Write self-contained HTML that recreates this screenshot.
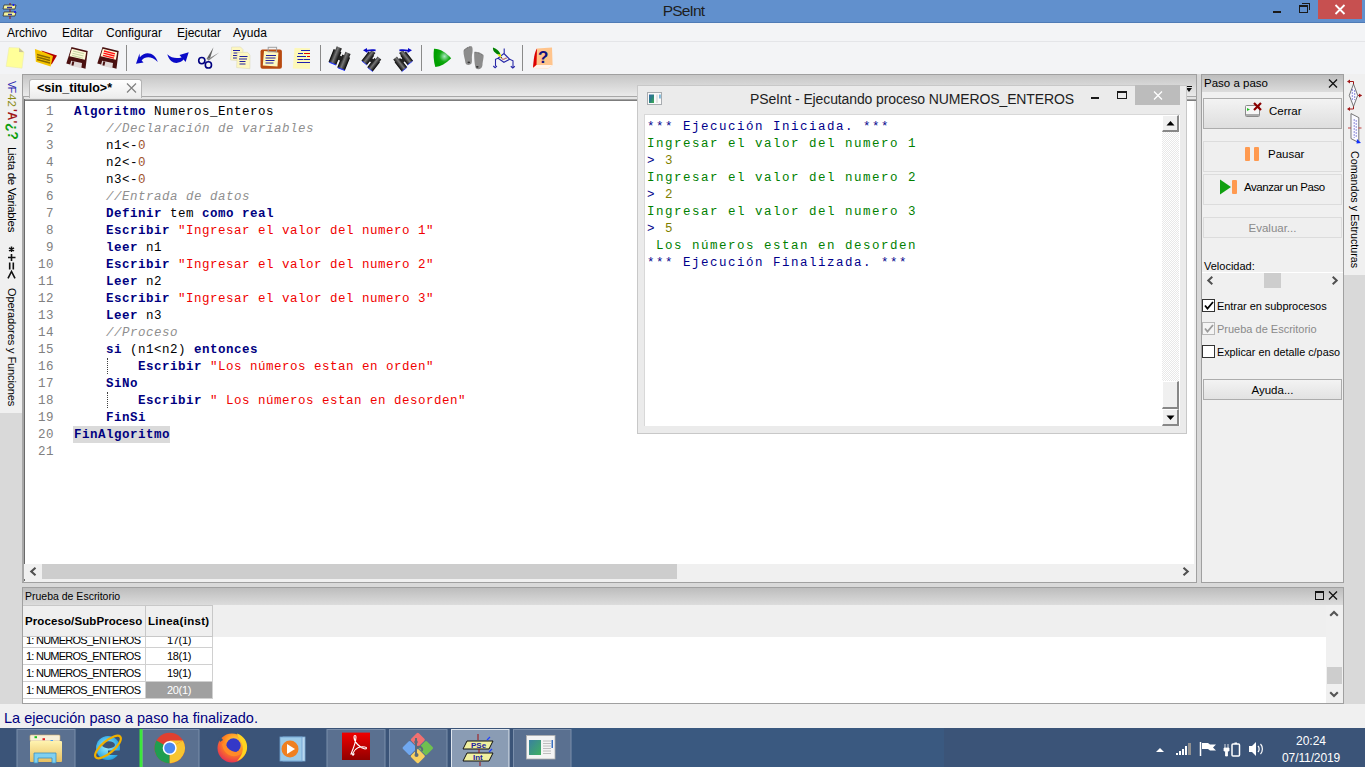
<!DOCTYPE html>
<html><head><meta charset="utf-8">
<style>
*{margin:0;padding:0;box-sizing:border-box}
html,body{width:1365px;height:767px;overflow:hidden;background:#d9d9d9;font-family:"Liberation Sans",sans-serif;font-size:12px;color:#000;position:relative}
.a{position:absolute}
.nw{white-space:nowrap}
#title{left:0;top:0;width:1365px;height:23px;background:#6190cd;border-bottom:1px solid #4f7bb6}
#menu{left:0;top:23px;width:1365px;height:18px;background:#f3f4f6}
#menu span{position:absolute;top:3px;font-size:12px}
#tool{left:0;top:41px;width:1365px;height:33px;background:#f3f4f6;border-top:1px solid #e4e5e8}
.sep{position:absolute;top:3px;width:1px;height:26px;background:#9a9a9a}
.code{font-family:"Liberation Mono",monospace;font-size:12.5px;letter-spacing:0.5px;line-height:17px;white-space:pre}
.kw{color:#00007f;font-weight:bold}
.str{color:#f00000}
.cm{color:#8f8f8f;font-style:italic}
.num{color:#a0522d}
.ln{color:#808080}
.vt{transform-origin:0 0;transform:rotate(90deg);white-space:nowrap}
.btn{position:absolute;left:1203px;width:139px;border:1px solid #acacac;background:linear-gradient(#f3f3f3,#dedede)}
.btnf{position:absolute;left:1203px;width:139px;border:1px solid #dcdcdc;background:#efefef}
.cb{position:absolute;left:1202px;width:13px;height:13px;border:1px solid #333;background:#fff}
.row{position:absolute;height:17px;border-bottom:1px solid #d0d0d0}
</style></head><body>
<!-- title bar -->
<div id="title" class="a">
  <svg class="a" style="left:2px;top:3px" width="16" height="16" viewBox="0 0 16 16">
    <path d="M8 0v16" stroke="#a01010" stroke-width="1"/>
    <path d="M2 2h12l-1 4H1z" fill="#f4f4a0" stroke="#333" stroke-width="0.8"/>
    <path d="M2 9h12l-1 4H1z" fill="#f4f4a0" stroke="#333" stroke-width="0.8"/>
    <path d="M5 4.5h5M6 11.5h4" stroke="#3030a0" stroke-width="1.6"/>
    <circle cx="11.5" cy="2" r="1" fill="#1010ff"/><circle cx="13" cy="9" r="1" fill="#1010ff"/>
  </svg>
  <div class="a nw" style="left:1px;width:1365px;top:2px;text-align:center;font-size:15.5px;letter-spacing:-0.8px;color:#1e1e1e">PSeInt</div>
  <div class="a" style="left:1273px;top:11px;width:8px;height:2px;background:#1a1a1a"></div>
  <div class="a" style="left:1299px;top:5px;width:9px;height:8px;border:1px solid #1a1a1a;border-top-width:2px"></div>
  <div class="a" style="left:1302px;top:3px;width:8px;height:7px;border-top:1px solid #1a1a1a;border-right:1px solid #1a1a1a"></div>
  <div class="a" style="left:1318px;top:0;width:44px;height:19px;background:#c75050"></div>
  <svg class="a" style="left:1334px;top:4px" width="12" height="11" viewBox="0 0 12 11"><path d="M1.5 1l9 9M10.5 1l-9 9" stroke="#fff" stroke-width="1.8"/></svg>
</div>
<!-- menu -->
<div id="menu" class="a">
<span style="left:7px">Archivo</span><span style="left:62px">Editar</span><span style="left:106px">Configurar</span><span style="left:177px">Ejecutar</span><span style="left:233px">Ayuda</span>
</div>
<!-- toolbar -->
<div id="tool" class="a"></div>
<svg class="a" style="left:0;top:0" width="560" height="74" viewBox="0 0 560 74">
<defs>
<linearGradient id="bino" x1="0" x2="1" y1="0" y2="0"><stop offset="0" stop-color="#000"/><stop offset="0.45" stop-color="#777"/><stop offset="1" stop-color="#000"/></linearGradient>
<radialGradient id="runG" cx="0.62" cy="0.42" r="0.5"><stop offset="0" stop-color="#a8e8c0"/><stop offset="0.6" stop-color="#10a810"/><stop offset="1" stop-color="#00a000"/></radialGradient>
</defs>
<!-- new -->
<path d="M9 47.5L19.2 47.9 24 52.2 22 68.2 6.1 66.4z" fill="#ffff99" stroke="#e8e8b0" stroke-width="0.5"/>
<path d="M19.2 47.9L24 52.2 19 52z" fill="#c9c39a"/>
<!-- open -->
<path d="M41.3 50.4L57 55.4 51.6 64.5z" fill="#b00000"/>
<path d="M34.9 49L43.6 52 53 56 50.6 66.4 35.9 61.7z" fill="#f5c400"/>
<path d="M37 54.5l13 3.5M37 57l13 3.5M37 59.5l13 3.5" stroke="#8a6a00" stroke-width="1.3"/>
<!-- save -->
<g id="sv">
<path d="M71.5 46.9L87.7 50.9 85.5 68.7 66.3 63.6z" fill="#4a1010"/>
<path d="M71.8 48.8L86.2 52.3 84.9 59.8 69.6 56.2z" fill="#fff8d8"/>
<path d="M71.2 60.8L82 63.1 81.3 68.3 69.8 65.4z" fill="#e0d8d8"/>
<rect x="72" y="61.5" width="2" height="4" fill="#4a1010" transform="rotate(14 73 63)"/>
</g>
<path d="M73 51l11 2.8M72.5 53.2l11 2.8M72 55.4l11 2.8" stroke="#c6d6a4" stroke-width="1.1"/>
<use href="#sv" x="31"/>
<path d="M104 51l11 2.8M103.5 53.2l11 2.8M103 55.4l11 2.8" stroke="#ff1010" stroke-width="1.3"/>
<!-- undo -->
<path d="M139.5 53.5L136 63.8 143.5 62.5 141.6 60.5C145 56.5 151 55.5 157.8 62 155 53 146 50 139.8 57.2z" fill="#0a0ac8"/>
<!-- redo -->
<path d="M188.7 52.2L185.6 62 183.6 59.6C179 64.5 170.5 65 167.3 54.3 171.5 58.5 177 58.5 181.6 57.4L179.5 55z" fill="#0a0ac8"/>
<!-- scissors -->
<path d="M206.5 59L213.5 47.2 210 58.5z" fill="#606060"/>
<path d="M207 59.5L219.2 52.4 208.6 60.8z" fill="#888"/>
<circle cx="201.8" cy="60.6" r="3.1" fill="none" stroke="#000080" stroke-width="1.6"/>
<circle cx="208.4" cy="64.9" r="3.1" fill="none" stroke="#000080" stroke-width="1.6"/>
<!-- copy -->
<path d="M231.6 47L240.5 46.9 243 49.5 242.9 61 230.6 60z" fill="#fdf7c0" stroke="#d8d4b0" stroke-width="0.5"/>
<path d="M233 50.5h7M233.5 53h6M233 55.5h5M233 58h4" stroke="#2020a0" stroke-width="1"/>
<path d="M237.3 52.5L247.5 52.3 250 55 249.9 68.7 236.6 67.6z" fill="#fdf7c0" stroke="#d8d4b0" stroke-width="0.5"/>
<path d="M239.5 56.5h8M239 59h8M239.5 61.5h6M239.5 64h6" stroke="#2020a0" stroke-width="1"/>
<!-- paste -->
<rect x="260.5" y="49.4" width="21.4" height="19.3" rx="2" fill="#b84a10"/>
<path d="M264 51.1L278.4 52.5 277.5 66.6 262.8 65.5z" fill="#fdf7c0"/>
<path d="M266 55.5h10M265.5 58h10M265.5 60.5h9M265.5 63h8" stroke="#2020a0" stroke-width="1"/>
<rect x="268.2" y="47.3" width="8.4" height="4.5" fill="none" stroke="#a0a0a0" stroke-width="1"/>
<!-- indent -->
<path d="M294.5 48L310 48.2 310 69 292.8 68.5z" fill="#fdf8b8"/>
<path d="M301 50.5h9M298 53.5h5M304 53.5h6M297 56.5h9M297.5 59.5h6M304 59.5h6M297 62.5h13" stroke="#2020b0" stroke-width="1.2"/>
<path d="M304 53.5h6M307 56.5h3" stroke="#e00000" stroke-width="1.2"/>
<!-- binoculars -->
<g transform="translate(341,58) rotate(22) scale(0.92)">
<path d="M-9 -10h6v4h1v15h-9v-15h2z" fill="url(#bino)"/>
<path d="M2 -8h6v4h1v15h-9v-15h2z" fill="url(#bino)"/>
<rect x="-3" y="-2" width="5" height="5" fill="#222"/>
<path d="M-10 9h8M1 11h8" stroke="#2030ff" stroke-width="1"/>
</g>
<g transform="translate(372.5,60.5) rotate(38) scale(0.78)">
<path d="M-9 -10h6v4h1v15h-9v-15h2z" fill="url(#bino)"/>
<path d="M2 -8h6v4h1v15h-9v-15h2z" fill="url(#bino)"/>
<rect x="-3" y="-2" width="5" height="5" fill="#222"/>
<path d="M-10 9h8M1 11h8" stroke="#2030ff" stroke-width="1"/>
</g>
<path d="M363 50.3L367 48 367 49.8C370 49 373 49 375.7 49.5L375.5 51.2C373 50.8 370 50.8 367.3 51.6L367.5 53z" fill="#0a0ac8"/>
<g transform="translate(402,60.5) scale(-1,1) rotate(38) scale(0.78)">
<path d="M-9 -10h6v4h1v15h-9v-15h2z" fill="url(#bino)"/>
<path d="M2 -8h6v4h1v15h-9v-15h2z" fill="url(#bino)"/>
<rect x="-3" y="-2" width="5" height="5" fill="#222"/>
<path d="M-10 9h8M1 11h8" stroke="#2030ff" stroke-width="1"/>
</g>
<path d="M412 50.3L408 48 408 49.8C405 49 402 49 399.3 49.5L399.5 51.2C402 50.8 405 50.8 407.7 51.6L407.5 53z" fill="#0a0ac8"/>
<!-- run -->
<path d="M434 48.7C440 48.5 446 52.5 451.2 58.2 446 63.5 440.5 66.5 435.3 67 433.5 61 433.2 54 434 48.7z" fill="url(#runG)"/>
<!-- footprints -->
<path d="M463.5 51C464 48.5 469 46 471.5 46.3 473 47 472.8 52 472 55 471.5 58 472.5 61 471.5 63.5 470 65.5 466 65.5 465.5 63 465 59 463.3 55 463.5 51z" fill="#8c8c8c"/>
<path d="M464 50.5l1.5-1.2M466.5 48.5l1.5-.8M469 47.3l1.2-.5" stroke="#777" stroke-width="1"/>
<ellipse cx="468.8" cy="62.3" rx="1.3" ry="0.9" fill="#333"/>
<path d="M474.2 52C475 51 481 52 483.5 55 484 57 482.5 62 482.5 65 482 69.5 478 70 476 68.5 474.5 66 474 56 474.2 52z" fill="#8c8c8c"/>
<path d="M475 52.5l1.5 .3M478 53l1.5 .6M481 54.3l1.3 .8" stroke="#777" stroke-width="1"/>
<ellipse cx="477.3" cy="66.8" rx="1.3" ry="0.9" fill="#333"/>
<!-- diagram -->
<path d="M504.2 48.4v5M503.9 53.5L509.7 59.3 503.9 62.3 498 58.2z M498 58.2L495.5 59.3v6.6M509.7 59.3L513 60.8v6.9" stroke="#2828a8" stroke-width="1.1" fill="none"/>
<path d="M493.3 66l1.8 1.6 1.8-1.6M510.8 66.2l2 1.7 2-1.7" stroke="#2828a8" stroke-width="1.2" fill="none"/>
<path d="M493 47.5C496 48.5 499.5 51 500.5 54.5 499.5 55.5 496 54 494 51.5 493 50 492.8 48.5 493 47.5z" fill="#008000"/>
<path d="M497.3 54.3C498.7 54.8 500 54.5 500.8 54 501.3 55.5 501.3 56.8 500.8 57.3 499.5 56.8 498 55.8 497.3 54.3z" fill="#f0f000"/>
<circle cx="501.3" cy="57.8" r="0.8" fill="#5a2a00"/>
<path d="M502 58.8c1 .6 2 .6 3-.2s1.5-.4 1.8-.3" stroke="#a02020" stroke-width="0.9" fill="none"/>
<!-- help -->
<path d="M537 48.5L552 47.5 552.6 65 548 68.5 533 68z" fill="#ffc48c"/>
<path d="M537 48.5C534.5 52 533.5 60 533 68L536.5 65z" fill="#dd0000"/>
<path d="M536.5 65L552.6 65 548 68.5 533 68z" fill="#fff4ec"/>
<text x="538" y="63" font-family="Liberation Sans" font-weight="bold" font-size="17" fill="#101080">?</text>
<!-- separators -->
<rect x="126" y="45" width="1" height="26" fill="#8a8a8a"/>
<rect x="320" y="45" width="1" height="26" fill="#8a8a8a"/>
<rect x="421" y="45" width="1" height="26" fill="#8a8a8a"/>
<rect x="522" y="45" width="1" height="26" fill="#8a8a8a"/>
</svg>




<!-- editor notebook -->
<div class="a" style="left:22px;top:74px;width:1175px;height:509px;background:#f0f0f0;border:1px solid #a0a0a0"></div>
<div class="a" style="left:23px;top:75px;width:1173px;height:21px;background:linear-gradient(#c6c6c6,#eaeaea)"></div>



<div class="a" style="left:23px;top:96px;width:1173px;height:1px;background:#a8a8a8"></div>
<div class="a" style="left:23px;top:97px;width:1173px;height:2px;background:#e4e4e4"></div>
<div class="a" style="left:23px;top:99px;width:1173px;height:1px;background:#a4a4a4"></div>
<div class="a" style="left:23px;top:100px;width:1173px;height:1px;background:#7c7c7c"></div>
<div class="a" style="left:29px;top:79px;width:113px;height:19px;border:1px solid #b4b4b4;border-bottom:none;border-radius:3px 3px 0 0;background:linear-gradient(#ffffff,#ececec)"></div>
<div class="a nw" style="left:37px;top:81px;font-size:12.5px;font-weight:bold">&lt;sin_titulo&gt;*</div>
<svg class="a" style="left:126px;top:83px" width="11" height="10" viewBox="0 0 11 10"><path d="M1 0.5l9 9M10 0.5l-9 9" stroke="#808080" stroke-width="1.2"/></svg>
<svg class="a" style="left:1186px;top:86px" width="7" height="7" viewBox="0 0 7 7"><path d="M0 0h6v1H0zM0 2h6L3 6z" fill="#111"/></svg>
<!-- editor white -->
<div class="a" style="left:22px;top:96px;width:2px;height:486px;background:#a8a8a8"></div>
<div class="a" style="left:24px;top:99px;width:1px;height:482px;background:#6a6a6a"></div>
<div class="a" style="left:25px;top:101px;width:1169px;height:463px;background:#fff"></div>
<!-- line numbers -->
<div class="a code ln" style="left:22px;top:104px;width:32px;text-align:right">1
2
3
4
5
6
7
8
9
10
11
12
13
14
15
16
17
18
19
20
21</div>
<div class="a" style="left:73px;top:426px;width:97px;height:17px;background:#dadada"></div>
<div class="a code" style="left:74px;top:104px"><span class="kw">Algoritmo</span> Numeros_Enteros
    <span class="cm">//Declaración de variables</span>
    n1&lt;-<span class="num">0</span>
    n2&lt;-<span class="num">0</span>
    n3&lt;-<span class="num">0</span>
    <span class="cm">//Entrada de datos</span>
    <span class="kw">Definir</span> tem <span class="kw">como</span> <span class="kw">real</span>
    <span class="kw">Escribir</span> <span class="str">"Ingresar el valor del numero 1"</span>
    <span class="kw">leer</span> n1
    <span class="kw">Escribir</span> <span class="str">"Ingresar el valor del numero 2"</span>
    <span class="kw">Leer</span> n2
    <span class="kw">Escribir</span> <span class="str">"Ingresar el valor del numero 3"</span>
    <span class="kw">Leer</span> n3
    <span class="cm">//Proceso</span>
    <span class="kw">si</span> (n1&lt;n2) <span class="kw">entonces</span>
        <span class="kw">Escribir</span> <span class="str">"Los números estan en orden"</span>
    <span class="kw">SiNo</span>
        <span class="kw">Escribir</span> <span class="str">" Los números estan en desorden"</span>
    <span class="kw">FinSi</span>
<span class="kw">FinAlgoritmo</span>
</div>
<div class="a" style="left:107px;top:358px;width:0;height:16px;border-left:1px dotted #404040"></div>
<div class="a" style="left:107px;top:392px;width:0;height:16px;border-left:1px dotted #404040"></div>
<!-- h scrollbar -->
<div class="a" style="left:24px;top:564px;width:1170px;height:15px;background:#f0f0f0"></div>
<div class="a" style="left:42px;top:564px;width:635px;height:15px;background:#cdcdcd"></div>
<svg class="a" style="left:29px;top:567px" width="8" height="9" viewBox="0 0 8 9"><path d="M6.5 0.8L2.3 4.5l4.2 3.7" stroke="#505050" stroke-width="2.1" fill="none"/></svg>
<svg class="a" style="left:1182px;top:567px" width="8" height="9" viewBox="0 0 8 9"><path d="M1.5 0.8l4.2 3.7-4.2 3.7" stroke="#505050" stroke-width="2.1" fill="none"/></svg>

<!-- console window -->
<div class="a" style="left:637px;top:85px;width:550px;height:349px;background:#ebebeb;border:1px solid #c8c8c8"></div>
<svg class="a" style="left:647px;top:92px" width="15" height="13" viewBox="0 0 15 13">
  <defs><linearGradient id="cwG" x1="0" y1="0" x2="1" y2="1"><stop offset="0" stop-color="#3a6aaa"/><stop offset="0.5" stop-color="#2a8080"/><stop offset="1" stop-color="#40b050"/></linearGradient></defs>
  <rect x="0.5" y="0.5" width="14" height="12" fill="#fafafa" stroke="#a8acb0"/>
  <rect x="2" y="2.5" width="5" height="8.5" fill="url(#cwG)"/>
  <rect x="9" y="2.5" width="2" height="8.5" fill="#e4e4e4"/>
  <rect x="12.2" y="2.5" width="1.5" height="4" fill="#60a8d0"/>
</svg>
<div class="a nw" style="left:750px;top:91px;font-size:14px;color:#1e1e1e;letter-spacing:-0.12px">PSeInt - Ejecutando proceso NUMEROS_ENTEROS</div>
<div class="a" style="left:1091px;top:97px;width:8px;height:2px;background:#1a1a1a"></div>
<div class="a" style="left:1117px;top:91px;width:10px;height:8px;border:1px solid #1a1a1a;border-top-width:2px"></div>
<div class="a" style="left:1135px;top:85px;width:45px;height:20px;background:#bcbcbc"></div>
<svg class="a" style="left:1153px;top:91px" width="10" height="9" viewBox="0 0 10 9"><path d="M1 0.5l8 8M9 0.5l-8 8" stroke="#fff" stroke-width="1.3"/></svg>
<div class="a" style="left:644px;top:114px;width:536px;height:312px;background:#fff;border-top:1px solid #d8d8d8;border-left:1px solid #d8d8d8"></div>
<div class="a code" style="left:647px;top:119px;color:#00008b;font-size:12.5px;letter-spacing:1.5px"><span>*** Ejecución Iniciada. ***</span>
<span style="color:#008000">Ingresar el valor del numero 1</span>
&gt; <span style="color:#7f7f00">3</span>
<span style="color:#008000">Ingresar el valor del numero 2</span>
&gt; <span style="color:#7f7f00">2</span>
<span style="color:#008000">Ingresar el valor del numero 3</span>
&gt; <span style="color:#7f7f00">5</span>
<span style="color:#008000"> Los números estan en desorden</span>
*** Ejecución Finalizada. ***</div>
<!-- console vscroll -->
<div class="a" style="left:1162px;top:115px;width:17px;height:311px;background:repeating-conic-gradient(#ffffff 0 25%,#e8e8e8 0 50%) 0 0/2px 2px"></div>
<div class="a" style="left:1162px;top:115px;width:17px;height:17px;background:#f0f0f0;border-right:2px solid #888;border-bottom:2px solid #888;border-left:1px solid #fff;border-top:1px solid #fff"></div>
<svg class="a" style="left:1166px;top:120px" width="9" height="6" viewBox="0 0 9 6"><path d="M0.5 5.5L4.5 1l4 4.5z" fill="#000"/></svg>
<div class="a" style="left:1162px;top:381px;width:17px;height:28px;background:#f0f0f0;border-right:2px solid #888;border-bottom:2px solid #888;border-left:1px solid #fff;border-top:1px solid #fff"></div>
<div class="a" style="left:1162px;top:409px;width:17px;height:17px;background:#f0f0f0;border-right:2px solid #888;border-bottom:2px solid #888;border-left:1px solid #fff;border-top:1px solid #fff"></div>
<svg class="a" style="left:1166px;top:415px" width="9" height="6" viewBox="0 0 9 6"><path d="M0.5 0.5h8L4.5 5z" fill="#000"/></svg>

<!-- right panel Paso a paso -->
<div class="a" style="left:1201px;top:74px;width:143px;height:509px;background:#f0f0f0;border:1px solid #a0a0a0"></div>
<div class="a" style="left:1202px;top:75px;width:141px;height:17px;background:linear-gradient(#bdbdbd,#dcdcdc)"></div>
<div class="a nw" style="left:1204px;top:77px;font-size:11.5px">Paso a paso</div>
<svg class="a" style="left:1328px;top:79px" width="10" height="9" viewBox="0 0 10 9"><path d="M1 0.5l8 8M9 0.5l-8 8" stroke="#111" stroke-width="1.3"/></svg>
<div class="btn" style="top:98px;height:31px"></div>
<svg class="a" style="left:1245px;top:102px" width="17" height="16" viewBox="0 0 17 16">
  <rect x="0.5" y="3.5" width="14" height="11" rx="1" fill="#f6f6f6" stroke="#8a8a8a"/>
  <rect x="1" y="12" width="13" height="2" fill="#aaa"/>
  <path d="M2 6l3 1.5-3 1.5z" fill="#20c020"/>
  <path d="M9 1l7 7M16 1l-7 7" stroke="#8b0000" stroke-width="2.2"/>
</svg>
<div class="a nw" style="left:1269px;top:105px;font-size:11.5px">Cerrar</div>
<div class="btnf" style="top:141px;height:31px"></div>
<div class="a" style="left:1245px;top:147px;width:5px;height:14px;background:#ff9a50;border-radius:1px"></div>
<div class="a" style="left:1254px;top:147px;width:5px;height:14px;background:#ff9a50;border-radius:1px"></div>
<div class="a nw" style="left:1268px;top:148px;font-size:11.5px">Pausar</div>
<div class="btnf" style="top:174px;height:31px"></div>
<svg class="a" style="left:1219px;top:179px" width="18" height="16" viewBox="0 0 18 16"><path d="M1 0.5l11 7.5-11 7.5z" fill="#10a010"/><rect x="13" y="1" width="5" height="14" rx="1" fill="#ff9a50"/></svg>
<div class="a nw" style="left:1244px;top:181px;font-size:11.5px;letter-spacing:-0.45px">Avanzar un Paso</div>
<div class="btnf" style="top:217px;height:21px"></div>
<div class="a nw" style="left:1203px;width:139px;text-align:center;top:222px;font-size:11.5px;color:#8a8a8a">Evaluar...</div>
<div class="a nw" style="left:1204px;top:260px;font-size:11px">Velocidad:</div>
<div class="a" style="left:1202px;top:272px;width:141px;height:17px;background:#f0f0f0;border-top:1px solid #fff"></div>
<svg class="a" style="left:1206px;top:276px" width="8" height="9" viewBox="0 0 8 9"><path d="M6.3 0.8L2.3 4.5l4 3.7" stroke="#505050" stroke-width="2" fill="none"/></svg>
<svg class="a" style="left:1331px;top:276px" width="8" height="9" viewBox="0 0 8 9"><path d="M1.7 0.8l4 3.7-4 3.7" stroke="#505050" stroke-width="2" fill="none"/></svg>
<div class="a" style="left:1264px;top:273px;width:17px;height:15px;background:#cdcdcd"></div>
<div class="cb" style="top:299px"></div>
<svg class="a" style="left:1204px;top:301px" width="10" height="9" viewBox="0 0 10 9"><path d="M1 4.5l2.5 3L9 1" stroke="#000" stroke-width="1.8" fill="none"/></svg>
<div class="a nw" style="left:1217px;top:300px;font-size:11px;letter-spacing:-0.05px">Entrar en subprocesos</div>
<div class="cb" style="top:322px;border-color:#b8b8b8;background:#f4f4f4"></div>
<svg class="a" style="left:1204px;top:324px" width="10" height="9" viewBox="0 0 10 9"><path d="M1 4.5l2.5 3L9 1" stroke="#9a9a9a" stroke-width="1.8" fill="none"/></svg>
<div class="a nw" style="left:1217px;top:323px;font-size:11px;color:#8a8a8a">Prueba de Escritorio</div>
<div class="cb" style="top:345px"></div>
<div class="a nw" style="left:1217px;top:346px;font-size:10.8px">Explicar en detalle c/paso</div>
<div class="btn" style="top:379px;height:21px;background:linear-gradient(#f3f3f3,#e2e2e2)"></div>
<div class="a nw" style="left:1203px;width:139px;text-align:center;top:384px;font-size:11.5px">Ayuda...</div>

<!-- right strip -->
<div class="a" style="left:1344px;top:74px;width:21px;height:201px;background:#f0f0f0"></div>

<!-- bottom panel -->
<div class="a" style="left:22px;top:587px;width:1322px;height:117px;background:#fff;border:1px solid #a0a0a0"></div>
<div class="a" style="left:23px;top:588px;width:1320px;height:17px;background:linear-gradient(#bdbdbd,#dcdcdc)"></div>
<div class="a nw" style="left:25px;top:590px;font-size:10.5px">Prueba de Escritorio</div>
<div class="a" style="left:1315px;top:591px;width:9px;height:9px;border:1px solid #111;border-top-width:2px"></div>
<svg class="a" style="left:1328px;top:591px" width="10" height="9" viewBox="0 0 10 9"><path d="M1 0.5l8 8M9 0.5l-8 8" stroke="#111" stroke-width="1.3"/></svg>
<div class="a" style="left:23px;top:605px;width:1303px;height:32px;background:#efefef"></div>
<div class="a" style="left:23px;top:605px;width:123px;height:32px;border-right:1px solid #c8c8c8;border-bottom:1px solid #c8c8c8;border-top:1px solid #c8c8c8"></div>
<div class="a" style="left:146px;top:605px;width:67px;height:32px;border-right:1px solid #c8c8c8;border-bottom:1px solid #c8c8c8;border-top:1px solid #c8c8c8"></div>
<div class="a nw" style="left:25px;top:615px;font-size:11.5px;font-weight:bold;letter-spacing:0.1px">Proceso/SubProceso</div>
<div class="a nw" style="left:148px;top:615px;font-size:11.5px;font-weight:bold;letter-spacing:0.3px">Linea(inst)</div>

<div class="a" style="left:23px;top:637px;width:123px;height:11px;border-right:1px solid #d0d0d0;border-bottom:1px solid #d0d0d0;overflow:hidden"><div class="a nw" style="left:3px;top:-3px;font-size:11px;letter-spacing:-0.75px">1: NUMEROS_ENTEROS</div></div>
<div class="a" style="left:146px;top:637px;width:67px;height:11px;border-right:1px solid #d0d0d0;border-bottom:1px solid #d0d0d0;overflow:hidden"><div class="a nw" style="left:0;width:66px;text-align:center;top:-3px;font-size:11px;letter-spacing:-0.3px">17(1)</div></div>
<div class="a" style="left:23px;top:648px;width:123px;height:17px;border-right:1px solid #d0d0d0;border-bottom:1px solid #d0d0d0"><div class="a nw" style="left:3px;top:2px;font-size:11px;letter-spacing:-0.75px">1: NUMEROS_ENTEROS</div></div>
<div class="a" style="left:146px;top:648px;width:67px;height:17px;border-right:1px solid #d0d0d0;border-bottom:1px solid #d0d0d0"><div class="a nw" style="left:0;width:66px;text-align:center;top:2px;font-size:11px;letter-spacing:-0.3px">18(1)</div></div>
<div class="a" style="left:23px;top:665px;width:123px;height:17px;border-right:1px solid #d0d0d0;border-bottom:1px solid #d0d0d0"><div class="a nw" style="left:3px;top:2px;font-size:11px;letter-spacing:-0.75px">1: NUMEROS_ENTEROS</div></div>
<div class="a" style="left:146px;top:665px;width:67px;height:17px;border-right:1px solid #d0d0d0;border-bottom:1px solid #d0d0d0"><div class="a nw" style="left:0;width:66px;text-align:center;top:2px;font-size:11px;letter-spacing:-0.3px">19(1)</div></div>
<div class="a" style="left:23px;top:682px;width:123px;height:17px;border-right:1px solid #d0d0d0;border-bottom:1px solid #d0d0d0"><div class="a nw" style="left:3px;top:2px;font-size:11px;letter-spacing:-0.75px">1: NUMEROS_ENTEROS</div></div>
<div class="a" style="left:146px;top:682px;width:67px;height:17px;background:#a0a0a0;border-right:1px solid #d0d0d0;border-bottom:1px solid #d0d0d0"><div class="a nw" style="left:0;width:66px;text-align:center;top:2px;font-size:11px;letter-spacing:-0.3px;color:#fff">20(1)</div></div>
<!-- prueba vscroll -->
<div class="a" style="left:1326px;top:605px;width:17px;height:98px;background:#f0f0f0"></div>
<svg class="a" style="left:1329px;top:610px" width="10" height="7" viewBox="0 0 10 7"><path d="M1.2 5.8l3.8-3.8 3.8 3.8" stroke="#555" stroke-width="2.1" fill="none"/></svg>
<div class="a" style="left:1327px;top:667px;width:15px;height:17px;background:#cdcdcd"></div>
<svg class="a" style="left:1329px;top:691px" width="10" height="7" viewBox="0 0 10 7"><path d="M1.2 1.2l3.8 3.8 3.8-3.8" stroke="#555" stroke-width="2.1" fill="none"/></svg>
<!-- status bar -->
<div class="a" style="left:0;top:704px;width:1365px;height:24px;background:#f0f0f0"></div>
<div class="a nw" style="left:4px;top:710px;font-size:14.5px;color:#000080">La ejecución paso a paso ha finalizado.</div>
<!-- taskbar -->
<div class="a" style="left:0;top:728px;width:1365px;height:39px;background:#3b5478"></div>

<!-- left strip content -->
<div class="a" style="left:0;top:74px;width:22px;height:339px;background:#f0f0f0"></div>
<div class="a vt" style="left:18px;top:81px;line-height:12px;color:#2828b0;font-size:10.5px;letter-spacing:-1.2px">VF</div>
<div class="a vt" style="left:18px;top:94px;line-height:12px;color:#8a8a10;font-size:11.5px">42</div>
<div class="a vt" style="left:18px;top:109px;line-height:12px;color:#a01818;font-weight:bold;font-size:12px">'A'</div>
<div class="a vt" style="left:18.5px;top:123px;line-height:12px;color:#10a010;font-weight:bold;font-size:14px;letter-spacing:-0.3px">¿?</div>
<div class="a vt" style="left:18px;top:147px;font-size:11.5px;letter-spacing:-0.3px;line-height:12px">Lista de Variables</div>
<svg class="a" style="left:0;top:240px" width="22" height="42" viewBox="0 240 22 42">
<path d="M11.5 246.5v5.5M9 247.8l5 3M14 247.8l-5 3" stroke="#111" stroke-width="1.5"/>
<path d="M8 257.5h7.5M11.5 254v7" stroke="#111" stroke-width="1.6"/>
<path d="M9.7 262.5v7M13.3 262.5v7" stroke="#111" stroke-width="1.6"/>
<path d="M8 278.3L11.5 271.5 15 278.3" stroke="#111" stroke-width="1.6" fill="none"/>
</svg>
<div class="a vt" style="left:18px;top:288px;font-size:11px;letter-spacing:-0.1px;line-height:12px">Operadores y Funciones</div>
<!-- right strip content -->
<div class="a vt" style="left:1361px;top:151px;font-size:10.7px;line-height:12px">Comandos y Estructuras</div>
<svg class="a" style="left:1344px;top:78px" width="21" height="70" viewBox="1344 78 21 70">
<path d="M1353.5 81.5v3M1353.5 106v3M1353.5 81.5h-5M1353.5 109h-5M1358 95.4h3.5" stroke="#a01818" stroke-width="1" fill="none"/>
<path d="M1347 81.5l3-2v4zM1347 109l3-2v4zM1362 95.4l-3-2v4z" fill="#a01818"/>
<path d="M1353.5 84l4.2 11.4-4.2 11-4.2-11z" fill="#f8f8ff" stroke="#555" stroke-width="0.8"/>
<path d="M1352.3 89v12M1354.7 90v10" stroke="#4040c0" stroke-width="0.6" stroke-dasharray="2 1"/>
<path d="M1351 113.6l7.8 4v25l-7.8-4z" fill="#fafaff" stroke="#555" stroke-width="0.8"/>
<path d="M1354.2 119v19M1356.2 120v17" stroke="#4040c0" stroke-width="0.6" stroke-dasharray="2 1"/>
<path d="M1348 128h3M1358.5 128h3" stroke="#c04040" stroke-width="1"/>
<path d="M1357 139l4 4-4.5 .5z" fill="#1030ff"/>
</svg>

<svg class="a" style="left:0;top:728px" width="1365" height="39" viewBox="0 728 1365 39">
<defs>
<linearGradient id="fold" x1="0" y1="0" x2="0" y2="1"><stop offset="0" stop-color="#fff3b0"/><stop offset="1" stop-color="#e8c060"/></linearGradient>
<radialGradient id="ieG" cx="0.45" cy="0.45" r="0.6"><stop offset="0" stop-color="#9ff0ff"/><stop offset="1" stop-color="#1a9ae0"/></radialGradient>
<radialGradient id="ffG" cx="0.6" cy="0.3" r="0.8"><stop offset="0" stop-color="#ffe040"/><stop offset="0.5" stop-color="#ff8020"/><stop offset="1" stop-color="#e02060"/></radialGradient>
<linearGradient id="pdfG" x1="0" y1="0" x2="0" y2="1"><stop offset="0" stop-color="#f00000"/><stop offset="1" stop-color="#900000"/></linearGradient>
<linearGradient id="scrG" x1="0" y1="0" x2="1" y2="1"><stop offset="0" stop-color="#3a80a0"/><stop offset="1" stop-color="#40b060"/></linearGradient>
</defs>
<!-- buttons -->
<rect x="571" y="728" width="373" height="39" fill="#3a5980"/>
<rect x="17" y="729.5" width="58" height="38" fill="#5a7090" stroke="#7b8fab" stroke-width="1"/>
<rect x="142.5" y="729.5" width="56.5" height="38" fill="#5a7090" stroke="#7b8fab" stroke-width="1"/>
<rect x="139.5" y="729" width="3" height="38" fill="#3ce83c"/>
<rect x="327" y="729.5" width="58" height="38" fill="#5a7090" stroke="#7b8fab" stroke-width="1"/>
<rect x="389.5" y="729.5" width="57.5" height="38" fill="#5a7090" stroke="#7b8fab" stroke-width="1"/>
<rect x="451.5" y="729.5" width="57.5" height="38" fill="#8a9cb4" stroke="#dfe6ee" stroke-width="1"/>
<rect x="513.5" y="729.5" width="57.5" height="38" fill="#5a7090" stroke="#7b8fab" stroke-width="1"/>
<!-- explorer -->
<rect x="30" y="735" width="30" height="6" rx="1" fill="#f8f0d8" stroke="#d0b070" stroke-width="0.6"/>
<rect x="34.5" y="736.2" width="2.5" height="2" fill="#20c020"/>
<rect x="42.5" y="738.2" width="2.5" height="2" fill="#e02020"/>
<rect x="50.5" y="740.2" width="2.5" height="2" fill="#2090ff"/>
<rect x="30" y="741" width="32" height="21" rx="1" fill="url(#fold)"/>
<path d="M34 763v-10h22v10h-4v-5h-14v5z" fill="#7fd0f0" stroke="#3a90c0" stroke-width="0.8"/>
<!-- IE -->
<circle cx="108" cy="748" r="12" fill="url(#ieG)"/>
<ellipse cx="108.5" cy="744.8" rx="6.5" ry="3.6" fill="#3b5478"/>
<path d="M108 750.5h13v4.5h-13z" fill="#3b5478"/>
<path d="M101 751c1 3 4 5 7 5" stroke="#3b5478" stroke-width="0" fill="none"/>
<ellipse cx="108" cy="747" rx="16" ry="6" transform="rotate(-40 108 747)" fill="none" stroke="#f0b000" stroke-width="2.2"/>
<!-- chrome -->
<circle cx="169.7" cy="748" r="15.2" fill="#e04030"/>
<path d="M169.7 748L156.5 755.6A15.2 15.2 0 0 0 169.7 763.2 z" fill="#1f9e50"/>
<path d="M169.7 748L156.5 740.4A15.2 15.2 0 0 0 162 761z" fill="#1f9e50"/>
<path d="M169.7 748L182.9 740.4A15.2 15.2 0 0 1 169.7 763.2z" fill="#f7c530"/>
<path d="M169.7 748L182.9 740.4 169.7 740.4z" fill="#f7c530"/>
<circle cx="169.7" cy="748" r="7" fill="#fff"/>
<circle cx="169.7" cy="748" r="5.5" fill="#4a88f0"/>
<!-- firefox -->
<circle cx="232" cy="748" r="14.5" fill="url(#ffG)"/>
<circle cx="233.5" cy="745.5" r="7.2" fill="#3438c8"/>
<path d="M222 744C223 752 229 757 236 756 241 755 244 751 245 747 242 752 237 753 232 751 228 749.5 226 746 225 742z" fill="#ff8a28"/>
<path d="M237 733.5C244 736 248 742 247 749 246 755 242 759 237 761 242 756 244 750 242 744 240.5 740 238 738 237 733.5z" fill="#ffd420"/>
<path d="M218 737c2 0 4 1 5 3l-3 2z" fill="#3b5478"/>
<!-- media player -->
<rect x="283" y="737" width="22" height="24" fill="#b8d8f0" stroke="#80b0d8" stroke-width="0.8"/>
<rect x="280" y="737" width="22" height="24" fill="#9ccae8" stroke="#70a0d0" stroke-width="0.8"/>
<circle cx="290" cy="749" r="8.5" fill="#f08020"/>
<path d="M287 744v10l8-5z" fill="#fff"/>
<!-- acrobat -->
<rect x="342" y="732.6" width="28" height="27.4" fill="url(#pdfG)"/>
<path d="M351 754c3-7 5-14 5-17 0-2-2-2-2 0 0 5 6 11 11 12 2 0 2-2 0-2-5-1-10 1-12 6-1 2 0 3 1 1z" fill="none" stroke="#fff" stroke-width="1.1"/>
<!-- git -->
<g transform="rotate(45 417.8 748)">
<rect x="406.6" y="736.8" width="10.8" height="10.8" rx="1.5" fill="#f07070"/>
<rect x="418.2" y="736.8" width="10.8" height="10.8" rx="1.5" fill="#70c050"/>
<rect x="406.6" y="748.4" width="10.8" height="10.8" rx="1.5" fill="#70a8f0"/>
<rect x="418.2" y="748.4" width="10.8" height="10.8" rx="1.5" fill="#f8d060"/>
</g>
<path d="M416 738v18M417 747c4-1 6 1 5 4" stroke="#5a6a7a" stroke-width="2" fill="none"/>
<circle cx="416" cy="742" r="1.8" fill="#5a6a7a"/><circle cx="416.5" cy="755" r="2" fill="#5a6a7a"/>
<!-- pseint -->
<path d="M467 741h26l-4 8h-26z" fill="#f0f0a0" stroke="#111" stroke-width="1"/>
<path d="M467 753h26l-4 8h-26z" fill="#f0f0a0" stroke="#111" stroke-width="1"/>
<text x="471" y="747.8" font-family="Liberation Sans" font-weight="bold" font-size="8" fill="#2020a0">PSe</text>
<text x="473" y="759.8" font-family="Liberation Sans" font-weight="bold" font-size="8" fill="#2020a0">Int</text>
<path d="M478 734v6M479 749v4M480 762v4" stroke="#a01010" stroke-width="1"/>
<path d="M487 740l3-3M489 752l3-3" stroke="#2040ff" stroke-width="1.2"/>
<!-- last app -->
<rect x="526.5" y="735.5" width="28.5" height="23.5" fill="#f4f4f4" stroke="#b0b0b0" stroke-width="0.8"/>
<rect x="529" y="740" width="12" height="15" fill="url(#scrG)"/>
<path d="M543 741h8M543 743.5h8M543 746h8M543 748.5h8M543 751h8M543 753.5h8" stroke="#b0b0b0" stroke-width="0.8"/>
<rect x="551.5" y="740" width="1.5" height="8" fill="#3a70c0"/>
<!-- tray -->
<path d="M1156 752l4-4 4 4z" fill="#fff"/>
<path d="M1176 755h2v-2h-2zM1179 755h2v-4h-2zM1182 755h2v-6h-2zM1185 755h2v-9h-2z" fill="#fff"/>
<rect x="1188" y="743" width="3" height="12" fill="#909090"/>
<path d="M1200.5 742v14" stroke="#fff" stroke-width="1.5"/>
<path d="M1202 743h6l2 1.5h6l-3 3 3 3h-6l-2-1.5h-6z" fill="#fff"/>
<path d="M1225 744v4M1228 744v4M1224 748h5v3h-1.5v5h-2v-5H1224z" fill="#fff" stroke="#fff" stroke-width="0.8"/>
<rect x="1232" y="744" width="7.5" height="12" rx="1" fill="none" stroke="#fff" stroke-width="1.5"/>
<rect x="1234.5" y="742.5" width="2.5" height="1.5" fill="#fff"/>
<path d="M1249 746h3l4-4v14l-4-4h-3z" fill="#fff"/>
<path d="M1258 746c1.5 1.5 1.5 4.5 0 6M1260.5 744c2.5 2.5 2.5 7.5 0 10" stroke="#fff" stroke-width="1.2" fill="none"/>
</svg>
<div class="a nw" style="left:1282px;top:733px;width:58px;text-align:center;font-size:12px;color:#fff;line-height:17px">20:24<br><span style="letter-spacing:-0.1px">07/11/2019</span></div>
</body></html>
